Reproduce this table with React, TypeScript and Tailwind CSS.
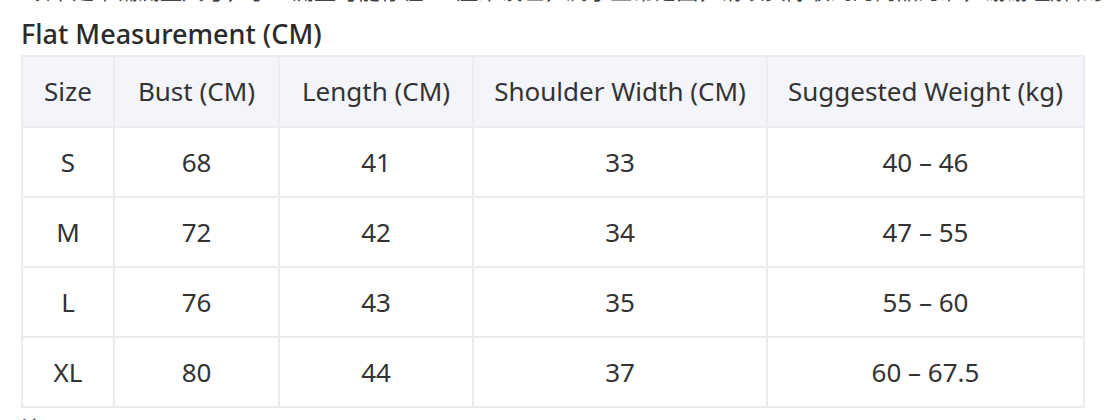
const columns = ["Size", "Bust (CM)", "Length (CM)", "Shoulder Width (CM)", "Suggested Weight (kg)"];
const widths = ["w-[92px]", "w-[165px]", "w-[194px]", "w-[294px]", "w-[317px]"];

const rows = [
  ["S", "68", "41", "33", "40 – 46"],
  ["M", "72", "42", "34", "47 – 55"],
  ["L", "76", "43", "35", "55 – 60"],
  ["XL", "80", "44", "37", "60 – 67.5"],
];

export default function App() {
  return (
    <div className="w-[1106px] h-[420px] overflow-hidden bg-white text-[#333] font-['Noto_Sans','Noto_Sans_CJK_SC',sans-serif]">
      <p className="-mt-[22px] pl-[28px] text-[22px] leading-[24px] text-[#444] whitespace-nowrap">
        以下是平铺测量尺寸，手工测量可能存在1-3厘米误差，属于正常范围，请以实际收到的商品为准，谢谢理解和支持
      </p>
      <div className="px-[21px]">
        <h2 className="mt-[17px] text-[27px] leading-[30px] font-medium text-[#2b2b2b]">Flat Measurement (CM)</h2>
        <table className="mt-[6px] border-collapse table-fixed w-[1062px] text-[26px]">
          <thead>
            <tr className="bg-[#f4f5fb]">
              {columns.map((c, i) => (
                <th key={c} className={`${widths[i]} h-[71px] border-2 border-[#ebebf0] font-normal text-center`}>
                  {c}
                </th>
              ))}
            </tr>
          </thead>
          <tbody>
            {rows.map((r) => (
              <tr key={r[0]}>
                {r.map((v, i) => (
                  <td key={i} className="h-[70px] border-2 border-[#ebebf0] text-center">
                    {v}
                  </td>
                ))}
              </tr>
            ))}
          </tbody>
        </table>
        <p className="mt-[8px] text-[22px] leading-[24px] text-[#444]">注：</p>
      </div>
    </div>
  );
}
